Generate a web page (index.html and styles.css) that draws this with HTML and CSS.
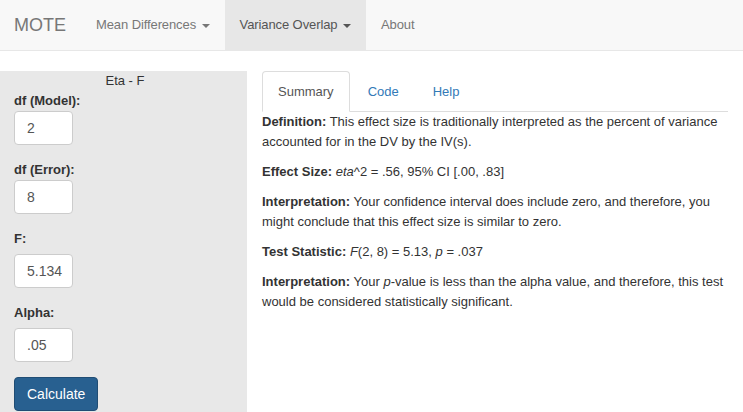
FILE: index.html
```html
<!DOCTYPE html>
<html>
<head>
<meta charset="utf-8">
<link rel="stylesheet" href="styles.css">
</head>
<body>
<nav class="navbar">
  <span class="brand">MOTE</span>
  <ul class="nav">
    <li><a>Mean Differences <span class="caret"></span></a></li>
    <li class="active"><a>Variance Overlap <span class="caret"></span></a></li>
    <li><a>About</a></li>
  </ul>
</nav>
<div class="layout">
  <aside class="sidebar">
    <div class="title">Eta - F</div>
    <div class="group">
      <label class="lbl">df (Model):</label>
      <div class="input">2</div>
    </div>
    <div class="group">
      <label class="lbl">df (Error):</label>
      <div class="input">8</div>
    </div>
    <div class="group">
      <label class="lbl spaced">F:</label>
      <div class="input">5.134</div>
    </div>
    <div class="group">
      <label class="lbl spaced">Alpha:</label>
      <div class="input">.05</div>
    </div>
    <button class="btn">Calculate</button>
  </aside>
  <main class="main">
    <ul class="tabs">
      <li class="active"><a>Summary</a></li>
      <li><a>Code</a></li>
      <li><a>Help</a></li>
    </ul>
    <div class="content">
      <p><b>Definition:</b> This effect size is traditionally interpreted as the percent of variance accounted for in the DV by the IV(s).</p>
      <p><b>Effect Size:</b> <i>eta</i>^2 = .56, 95% CI [.00, .83]</p>
      <p><b>Interpretation:</b> Your confidence interval does include zero, and therefore, you might conclude that this effect size is similar to zero.</p>
      <p><b>Test Statistic:</b> <i>F</i>(2, 8) = 5.13, <i>p</i> = .037</p>
      <p><b>Interpretation:</b> Your <i>p</i>-value is less than the alpha value, and therefore, this test would be considered statistically significant.</p>
    </div>
  </main>
</div>
</body>
</html>
```
FILE: styles.css
```css
* { box-sizing: border-box; }
html, body { margin: 0; padding: 0; }
body {
  font-family: "Liberation Sans", Arial, sans-serif;
  font-size: 13px;
  line-height: 20px;
  color: #333;
  background: #fff;
  height: 412px;
  overflow: hidden;
}
.navbar {
  height: 51px;
  background: #f8f8f8;
  border-bottom: 1px solid #e7e7e7;
  display: flex;
  margin-bottom: 20px;
}
.brand {
  font-size: 18px;
  line-height: 20px;
  padding: 15px 15px 15px 14px;
  color: #777;
}
.nav {
  list-style: none;
  margin: 0;
  padding: 0;
  display: flex;
}
.nav a {
  display: block;
  padding: 15px;
  line-height: 20px;
  letter-spacing: -0.1px;
  color: #777;
}
.nav .active a {
  background: #e7e7e7;
  color: #555;
}
.caret {
  display: inline-block;
  width: 0;
  height: 0;
  margin-left: 2px;
  vertical-align: middle;
  border-top: 4px solid;
  border-right: 4px solid transparent;
  border-left: 4px solid transparent;
}
.layout {
  display: flex;
  height: 341px;
}
.sidebar {
  width: 247px;
  background: #e8e8e8;
  padding: 0 14px;
}
.title {
  text-align: center;
  line-height: 20px;
  padding-left: 3px;
}
.group { margin-bottom: 15px; }
.lbl {
  display: block;
  font-weight: bold;
  line-height: 20px;
}
.lbl.spaced { margin-bottom: 5px; }
.input {
  width: 59px;
  height: 34px;
  padding: 6px 12px;
  background: #fff;
  border: 1px solid #ccc;
  border-radius: 4px;
  color: #555;
  font-size: 14px;
  line-height: 20px;
}
.btn {
  display: block;
  font-family: inherit;
  font-size: 14px;
  line-height: 20px;
  padding: 6px 12px;
  color: #fff;
  background: #286090;
  border: 1px solid #204d74;
  border-radius: 4px;
  height: 34px;
}
.main {
  flex: 1;
  padding: 0 15px;
}
.tabs {
  list-style: none;
  margin: 0;
  padding: 0;
  display: flex;
  border-bottom: 1px solid #ddd;
}
.tabs li {
  margin-bottom: -1px;
  margin-right: 2px;
}
.tabs a {
  display: block;
  padding: 10px 15px 9px;
  line-height: 20px;
  color: #337ab7;
  border: 1px solid transparent;
  border-radius: 4px 4px 0 0;
}
.tabs .active a {
  color: #555;
  background: #fff;
  border-color: #ddd;
  border-bottom-color: transparent;
}
.content p {
  margin: 0 0 10px;
}
```
